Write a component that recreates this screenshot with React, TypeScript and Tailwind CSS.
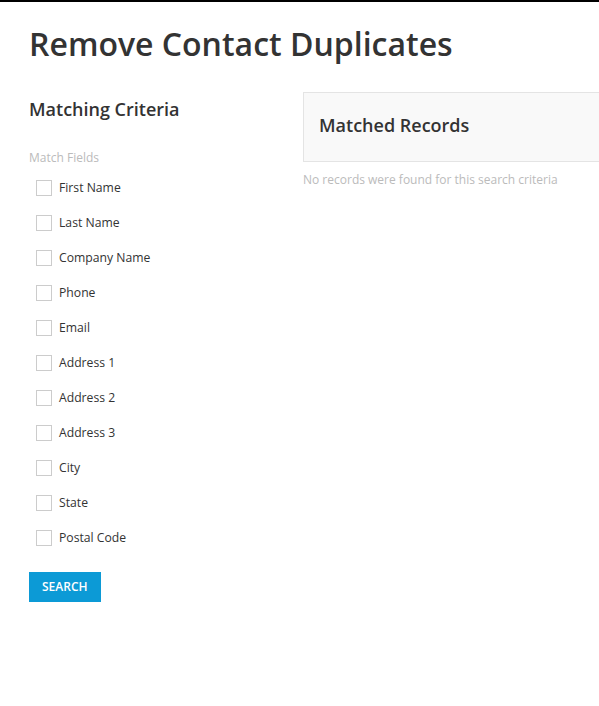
import React from 'react';

const fields = [
  'First Name',
  'Last Name',
  'Company Name',
  'Phone',
  'Email',
  'Address 1',
  'Address 2',
  'Address 3',
  'City',
  'State',
  'Postal Code',
];

export default function App() {
  return (
    <div className="min-h-[706px] w-[599px] overflow-hidden bg-white border-t-2 border-black font-['Open_Sans',sans-serif] text-[#333]">
      <div className="pl-[30px] pt-[22px]">
        <h1 className="text-[32px] font-semibold leading-[40px] whitespace-nowrap -ml-[1px]">Remove Contact Duplicates</h1>
      </div>
      <div className="flex mt-[28px]">
        <div className="w-[303px] shrink-0 pl-[30px]">
          <h2 className="text-[18px] font-semibold leading-[24px] mt-[5px] -ml-[1px]">Matching Criteria</h2>
          <div className="mt-[29px] text-[12px] text-[#bbb] leading-[16px] -ml-[1px]">Match Fields</div>
          <div className="mt-[4px] flex flex-col">
            {fields.map((f) => (
              <label key={f} className="flex items-center h-[35px] pl-[6px] gap-[7px] text-[12.2px] leading-[16px]">
                <span className="w-[16px] h-[16px] border border-[#ccc] bg-white shrink-0" />
                <span>{f}</span>
              </label>
            ))}
          </div>
          <button className="mt-[17px] bg-[#0c9ad6] text-white text-[12px] font-semibold uppercase h-[30px] px-[13px] -ml-[1px]">
            Search
          </button>
        </div>
        <div className="w-[400px] shrink-0">
          <div className="h-[70px] bg-[#f9f9f9] border border-[#e4e4e4] flex items-center pl-[15px]">
            <h2 className="text-[18px] font-semibold leading-[24px] -mt-[4px]">Matched Records</h2>
          </div>
          <div className="mt-[10px] text-[12px] text-[#bbb] leading-[16px]">No records were found for this search criteria</div>
        </div>
      </div>
    </div>
  );
}
